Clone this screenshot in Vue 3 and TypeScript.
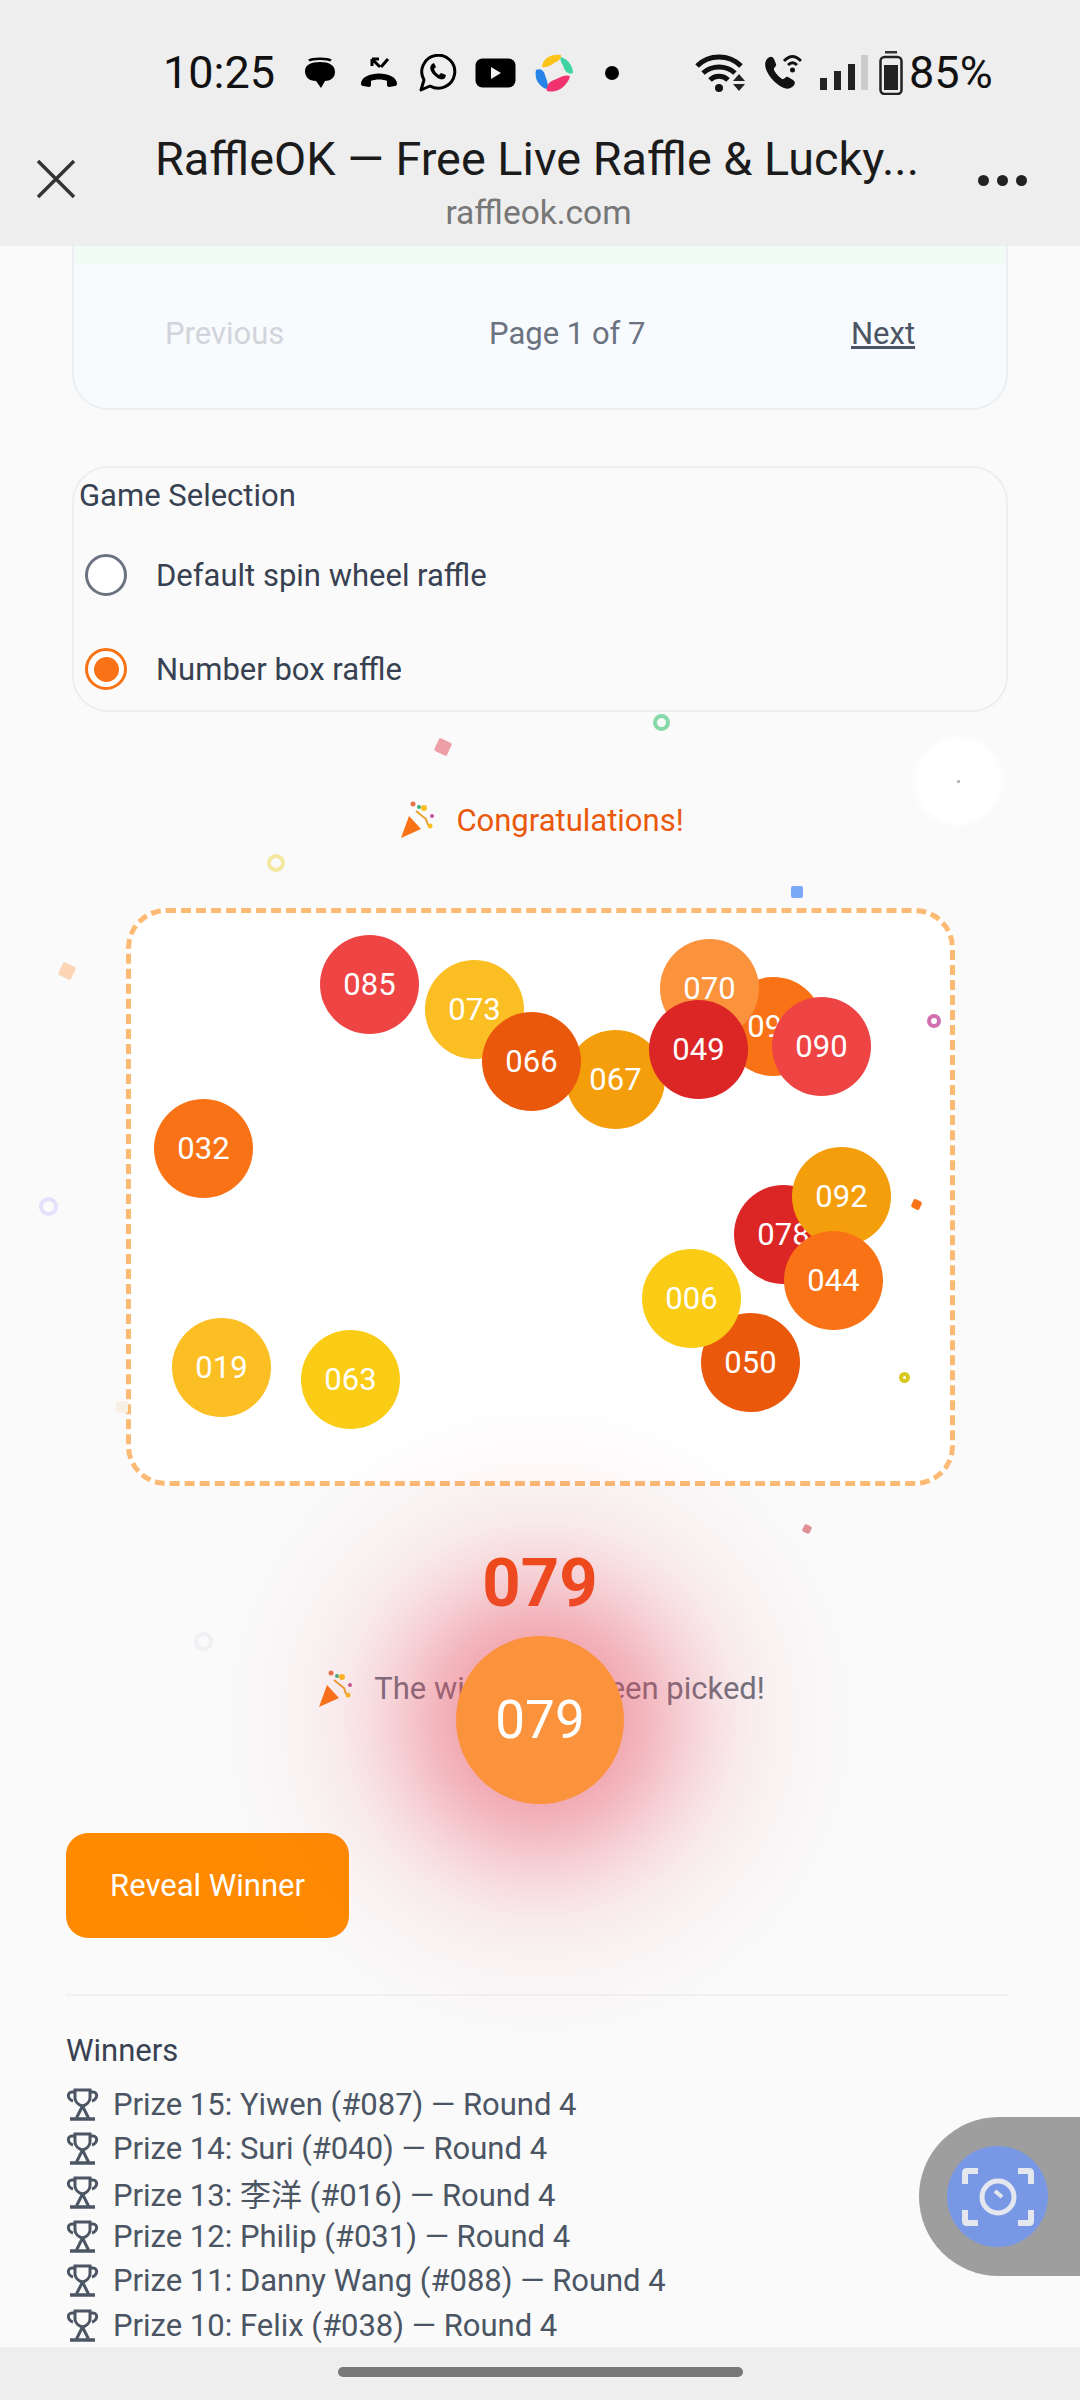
<template>
  <div class="screen">
    <header class="topbar">
      <div class="status">
        <span class="time">10:25</span>
        <svg class="ic" style="margin-left:28px" width="34" height="32" viewBox="0 0 34 32">
          <path d="M6 3.500C9 1 25 1 28 3.500" fill="none" stroke="#000" stroke-width="2.500" />
          <path d="M17 5c9 0 15 3 15 10 0 6-5 9-10 9l-4 7-5-7C6 24 2 20 2 14 2 8 8 5 17 5z" fill="#000" />
        </svg>
        <svg class="ic" style="margin-left:21px" width="42" height="32" viewBox="0 0 42 32">
          <path d="M3 27c0-14 36-14 36 0 0 1-1 2-2 2l-6 1c-1 0-2-1-2-2v-4c-4-2-12-2-16 0v4c0 1-1 2-2 2l-6-1c-1 0-2-1-2-2z" fill="#000" />
          <path d="M14 2l8 8M14 2v7M14 2h7M23 10l7-8" fill="none" stroke="#000" stroke-width="3" />
        </svg>
        <svg class="ic" style="margin-left:19px" width="38" height="38" viewBox="0 0 38 38">
          <path d="M2 36l3-10a16.500 16.500 0 1 1 6 6z" fill="none" stroke="#000" stroke-width="3" stroke-linejoin="round" />
          <path d="M13 10c-3 3-2 7 2 11s8 6 11 3l1-3-5-2-2 2c-2-1-4-3-5-6l2-2-2-4z" fill="#000" />
        </svg>
        <svg class="ic" style="margin-left:18px" width="41" height="30" viewBox="0 0 41 30">
          <rect x="0.500" y="0.500" width="40" height="29" rx="7" fill="#000" />
          <path d="M16 9l10 6-10 6z" fill="#f0f0f0" />
        </svg>
        <svg class="ic" style="margin-left:17px" width="42" height="42" viewBox="0 0 42 42">
          <path d="M9 15C9 8 17 1 28 3c1 4-3 6-7 8-3 2-7 5-12 4z" fill="#fcc419" />
          <path d="M28 5c6 2 12 8 12 16-5 2-8-2-9-5-1-4-5-7-3-11z" fill="#3ed3a3" />
          <path d="M14 39c-2-5 2-9 7-11 5-2 10-6 16-4-2 9-12 18-23 15z" fill="#f0326e" />
          <path d="M13 37C6 34 1 27 3 18c5-2 8 1 9 5 1 4 5 10 1 14z" fill="#2684e8" />
        </svg>
        <i class="dot"></i>
        <svg class="ic" style="margin-left:76px" width="52" height="40" viewBox="0 0 52 40">
          <path d="M2 13c12-12 32-12 44 0M8 20c9-8 23-8 32 0M15 27c5-5 13-5 18 0" fill="none" stroke="#111" stroke-width="5" />
          <circle cx="24" cy="35" r="4" fill="#111" />
          <path d="M38 28l6-7 6 7zM38 31h12l-6 7z" fill="#222" />
        </svg>
        <svg class="ic" style="margin-left:17px" width="38" height="38" viewBox="0 0 38 38">
          <path d="M3 5c3-3 5-3 7 0l2 5c1 2-3 4-2 6 2 4 5 7 8 9 2 1 4-3 6-2l5 3c3 2 2 5-1 7-4 3-9 2-16-4C4 22-2 11 3 5z" fill="#111" />
          <path d="M20 7c6-6 11-6 17 0M24 11c3-3 6-3 9 0" fill="none" stroke="#111" stroke-width="3" />
          <circle cx="28.500" cy="16" r="2.500" fill="#111" />
        </svg>
        <svg class="ic" style="margin-left:18px" width="48" height="36" viewBox="0 0 48 36">
          <rect x="0" y="23" width="7" height="12" fill="#222" />
          <rect x="14" y="16" width="7" height="19" fill="#222" />
          <rect x="28" y="9" width="7" height="26" fill="#222" />
          <rect x="41" y="0" width="7" height="35" fill="#ccc" />
        </svg>
        <svg class="ic" style="margin-left:11px" width="24" height="44" viewBox="0 0 24 44">
          <rect x="6" y="0" width="12" height="2.500" fill="#333" />
          <rect x="1.500" y="6" width="21" height="37" rx="4" fill="none" stroke="#222" stroke-width="2.500" />
          <rect x="5" y="14" width="14" height="25" fill="#222" />
        </svg>
        <span class="pct">85%</span>
      </div>
      <div class="title-bar">
        <div class="close">
          <svg width="40" height="40" viewBox="0 0 40 40"><path d="M2 2l36 36M38 2L2 38" stroke="#333" stroke-width="3.500" /></svg>
        </div>
        <div class="title-text">
          <div class="title">RaffleOK — Free Live Raffle &amp; Lucky...</div>
          <div class="url">raffleok.com</div>
        </div>
        <div class="more"><i></i><i></i><i></i></div>
      </div>
    </header>

    <main class="page">
      <section class="card pager-card">
        <div class="green-strip"></div>
        <div class="pager">
          <span class="prev">Previous</span>
          <span class="page-no">Page 1 of 7</span>
          <a class="next">Next</a>
        </div>
      </section>

      <section class="card game-card">
        <div class="legend">Game Selection</div>
        <label class="radio-row">
          <span class="radio"></span>
          <span>Default spin wheel raffle</span>
        </label>
        <label class="radio-row">
          <span class="radio on"><i></i></span>
          <span>Number box raffle</span>
        </label>
      </section>

      <div class="congrats">
        <svg class="popper" width="38" height="38" viewBox="0 0 38 38">
          <path d="M1 37l8-22 12 13z" fill="#f97316" />
          <circle cx="13" cy="3" r="2.500" fill="#e8734a" />
          <circle cx="19" cy="6" r="2" fill="#3fae7a" />
          <circle cx="24" cy="7" r="3" fill="#fbbf24" />
          <circle cx="32" cy="15" r="2" fill="#c0569a" />
          <circle cx="30" cy="25" r="2.500" fill="#fbbf24" />
          <path d="M16 10l10 8 2 6" fill="none" stroke="#e8a030" stroke-width="2" />
        </svg>
        <span>Congratulations!</span>
      </div>

      <div class="box">
        <div
          v-for="b in bubbles"
          :key="b.n"
          class="bubble"
          :style="{ left: b.x - 180 + 'px', top: b.y - 963 + 'px', background: b.c }"
        >
          {{ b.n }}
        </div>
      </div>

      <div class="reveal">
        <div class="big-no">079</div>
        <div class="picked">
          <svg class="popper" width="38" height="38" viewBox="0 0 38 38">
            <path d="M1 37l8-22 12 13z" fill="#f97316" />
            <circle cx="13" cy="3" r="2.500" fill="#e8734a" />
            <circle cx="19" cy="6" r="2" fill="#3fae7a" />
            <circle cx="24" cy="7" r="3" fill="#fbbf24" />
            <circle cx="32" cy="15" r="2" fill="#c0569a" />
            <circle cx="30" cy="25" r="2.500" fill="#fbbf24" />
            <path d="M16 10l10 8 2 6" fill="none" stroke="#e8a030" stroke-width="2" />
          </svg>
          <span>The winner has been picked!</span>
        </div>
        <div class="glow"></div>
        <div class="winner-ball">079</div>
      </div>

      <button class="reveal-btn">Reveal Winner</button>

      <div class="winners">
        <h3>Winners</h3>
        <div v-for="w in winners" :key="w" class="winner-row">
          <svg width="33" height="33" viewBox="0 0 33 33" fill="none" stroke="#4b5563" stroke-width="3">
            <path d="M9 2h15v8c0 4-4 7-7.500 8C13 17 9 14 9 10z" />
            <path d="M9 4H6C1 4 1 11 7 13M24 4h3c5 0 5 7-1 9" />
            <path d="M16.500 18l-6 12M16.500 18l6 12" />
            <path d="M4 31h25" stroke-width="3.500" />
          </svg>
          <span>{{ w }}</span>
        </div>
      </div>
    </main>

    <footer class="navbar"><i></i></footer>

    <div class="confetti">
      <i
        v-for="(c, i) in confetti"
        :key="i"
        :class="c.k"
        :style="{ left: c.x - c.s / 2 + 'px', top: c.y - c.s / 2 + 'px', width: c.s + 'px', height: c.s + 'px', color: c.c }"
      ></i>
    </div>

    <div class="shot-tab">
      <div class="shot-btn">
        <svg width="72" height="58" viewBox="0 0 72 58" fill="none" stroke="#e4e7ee">
          <path d="M3 16V5q0-2 2-2h11M56 3h11q2 0 2 2v11M3 42v11q0 2 2 2h11M56 55h11q2 0 2-2V42" stroke-width="6" />
          <circle cx="36" cy="29" r="16" stroke-width="5" />
          <path d="M33 23l7 6" stroke-width="4" />
        </svg>
      </div>
    </div>
  </div>
</template>

<script setup lang="ts">
interface Bubble {
  n: string
  x: number
  y: number
  c: string
}

const bubbles: Bubble[] = [
  { n: '085', x: 369, y: 985, c: '#ef4444' },
  { n: '073', x: 474, y: 1010, c: '#fbbf24' },
  { n: '067', x: 615, y: 1080, c: '#f59e0b' },
  { n: '066', x: 531, y: 1062, c: '#ea580c' },
  { n: '095', x: 773, y: 1027, c: '#f97316' },
  { n: '070', x: 709, y: 989, c: '#fb923c' },
  { n: '049', x: 698, y: 1050, c: '#dc2626' },
  { n: '090', x: 821, y: 1047, c: '#ef4444' },
  { n: '032', x: 203, y: 1149, c: '#f97316' },
  { n: '078', x: 783, y: 1235, c: '#dc2626' },
  { n: '092', x: 841, y: 1197, c: '#f59e0b' },
  { n: '044', x: 833, y: 1281, c: '#f97316' },
  { n: '050', x: 750, y: 1363, c: '#ea580c' },
  { n: '006', x: 691, y: 1299, c: '#facc15' },
  { n: '019', x: 221, y: 1368, c: '#fbbf24' },
  { n: '063', x: 350, y: 1380, c: '#facc15' }
]

const winners = [
  'Prize 15: Yiwen (#087) — Round 4',
  'Prize 14: Suri (#040) — Round 4',
  'Prize 13: 李洋 (#016) — Round 4',
  'Prize 12: Philip (#031) — Round 4',
  'Prize 11: Danny Wang (#088) — Round 4',
  'Prize 10: Felix (#038) — Round 4'
]

// falling confetti, caught mid-air so every piece has its own spot
const confetti = [
  { k: 'ring', x: 661, y: 722, s: 17, c: '#86d9a8' },
  { k: 'diamond', x: 443, y: 747, s: 14, c: '#eea0a8' },
  { k: 'blob', x: 958, y: 781, s: 84, c: '#ffffff' },
  { k: 'ring', x: 276, y: 863, s: 18, c: '#f5e6a0' },
  { k: 'square', x: 797, y: 892, s: 12, c: '#7ba8f8' },
  { k: 'diamond', x: 67, y: 971, s: 14, c: '#fbd5b5' },
  { k: 'ring', x: 934, y: 1021, s: 14, c: '#d070b0' },
  { k: 'diamond', x: 916, y: 1204, s: 9, c: '#f97316' },
  { k: 'ring', x: 904, y: 1377, s: 11, c: '#d8c820' },
  { k: 'ring', x: 48, y: 1206, s: 19, c: '#e5e0fb' },
  { k: 'square', x: 122, y: 1407, s: 12, c: '#f8efe5' },
  { k: 'ring', x: 203, y: 1641, s: 19, c: '#f0f0f4' },
  { k: 'diamond', x: 807, y: 1529, s: 8, c: '#e08f95' }
]
</script>

<style>
html,
body {
  margin: 0;
  background: #fafafa;
}
</style>

<style scoped>
.screen {
  position: relative;
  display: flex;
  flex-direction: column;
  width: 1080px;
  height: 2400px;
  overflow: hidden;
  background: #fafafa;
  font-family: Roboto, "Noto Sans CJK SC", sans-serif;
  color: #374151;
}
.topbar {
  flex: none;
  height: 246px;
  background: #eeeeee;
}
.status {
  display: flex;
  align-items: center;
  height: 46px;
  padding: 50px 0 0 163px;
  color: #111;
}
.ic {
  flex: none;
  display: block;
}
.time,
.pct {
  font-size: 45px;
  line-height: 46px;
}
.pct {
  margin-left: 6px;
}
.dot {
  width: 14px;
  height: 14px;
  margin-left: 30px;
  border-radius: 50%;
  background: #000;
}
.title-bar {
  display: flex;
  align-items: center;
  margin-top: 35px;
  padding: 0 53px 0 36px;
}
.close {
  flex: none;
  width: 40px;
  height: 40px;
  margin-top: -6px;
}
.title-text {
  flex: 1;
  text-align: center;
  margin-left: 20px;
}
.title {
  font-size: 46.800px;
  line-height: 56px;
  color: #1b1b1b;
}
.url {
  margin-top: 6px;
  padding-left: 3px;
  font-size: 33.500px;
  line-height: 40px;
  color: #777;
}
.more {
  display: flex;
  gap: 8px;
  flex: none;
  margin-top: -3px;
}
.more i {
  width: 11px;
  height: 11px;
  border-radius: 50%;
  background: #222;
}
.page {
  flex: 1;
  overflow: hidden;
}
.card {
  box-sizing: border-box;
  margin: 0 72px;
  border: 2px solid #eceef1;
  border-radius: 36px;
}
.pager-card {
  height: 164px;
  border-top: 0;
  border-radius: 0 0 36px 36px;
  background: #f8fbfe;
}
.green-strip {
  height: 18px;
  background: #f1fbf5;
}
.pager {
  display: grid;
  grid-template-columns: 324px 362px auto;
  padding: 50px 0 0 91px;
  font-size: 31px;
  line-height: 40px;
}
.prev {
  color: #d1d5db;
}
.page-no {
  color: #6b7280;
}
.next {
  color: #4b5563;
  text-decoration: underline;
}
.game-card {
  height: 246px;
  margin-top: 56px;
  padding: 6px 5px 0;
  font-size: 31px;
}
.legend {
  line-height: 44px;
  color: #374151;
}
.radio-row {
  display: flex;
  align-items: center;
  gap: 29px;
  height: 94px;
  margin-left: 6px;
  color: #374151;
}
.radio-row:first-of-type {
  margin-top: 10px;
}
.radio {
  box-sizing: border-box;
  display: flex;
  align-items: center;
  justify-content: center;
  width: 42px;
  height: 42px;
  border: 3px solid #6b7280;
  border-radius: 50%;
  background: #fff;
}
.radio.on {
  border-color: #f97316;
}
.radio.on i {
  width: 25px;
  height: 25px;
  border-radius: 50%;
  background: #f97316;
}
.congrats {
  display: flex;
  align-items: center;
  justify-content: center;
  gap: 18px;
  height: 44px;
  margin-top: 86px;
  padding-left: 4px;
  font-size: 31px;
  color: #ea580c;
}
.box {
  position: relative;
  box-sizing: border-box;
  width: 829px;
  height: 578px;
  margin: 66px 0 0 126px;
  border: 5px dashed #fdba74;
  border-radius: 40px;
  background: #fff;
}
.bubble {
  position: absolute;
  display: flex;
  align-items: center;
  justify-content: center;
  width: 99px;
  height: 99px;
  border-radius: 50%;
  font-size: 31px;
  color: #fff;
}
.reveal {
  position: relative;
  height: 345px;
  text-align: center;
}
.big-no {
  padding-top: 57px;
  font-size: 67px;
  line-height: 80px;
  font-weight: 700;
  color: #ef4a0e;
}
.picked {
  display: flex;
  align-items: center;
  justify-content: center;
  gap: 18px;
  margin-top: 46px;
  padding-left: 3px;
  font-size: 31px;
  line-height: 40px;
  color: #6b7280;
}
.glow {
  position: absolute;
  left: 220px;
  top: -86px;
  width: 640px;
  height: 640px;
  border-radius: 50%;
  background: radial-gradient(
    circle closest-side,
    rgba(232, 70, 90, 0.44) 84px,
    rgba(232, 70, 90, 0.36) 110px,
    rgba(232, 70, 90, 0.25) 140px,
    rgba(232, 70, 90, 0.16) 170px,
    rgba(232, 70, 90, 0.09) 200px,
    rgba(232, 70, 90, 0.045) 240px,
    rgba(232, 70, 90, 0.02) 280px,
    rgba(232, 70, 90, 0) 320px
  );
}
.winner-ball {
  position: absolute;
  left: 456px;
  top: 150px;
  width: 168px;
  height: 168px;
  border-radius: 50%;
  background: #fb923c;
  color: #fff;
  font-size: 53px;
  line-height: 168px;
}
.reveal-btn {
  display: block;
  width: 283px;
  height: 105px;
  margin: 2px 0 0 66px;
  border: 0;
  border-radius: 22px;
  background: #ff8a00;
  color: #fff;
  font: 31px Roboto, sans-serif;
}
.winners {
  margin: 56px 72px 0 66px;
  padding-top: 33px;
  border-top: 2px solid #f1f1f1;
  font-size: 31px;
  color: #4b5563;
}
.winners h3 {
  margin: 0 0 9px;
  font-size: 31px;
  line-height: 44px;
  font-weight: 400;
  color: #374151;
}
.winner-row {
  display: flex;
  align-items: center;
  gap: 14px;
  height: 44.200px;
  white-space: nowrap;
}
.winner-row svg {
  flex: none;
}
.navbar {
  flex: none;
  position: relative;
  z-index: 3;
  display: flex;
  align-items: center;
  justify-content: center;
  height: 53px;
  background: #eeeeee;
}
.navbar i {
  width: 405px;
  height: 10px;
  margin-bottom: 4px;
  border-radius: 5px;
  background: #787878;
}
.confetti {
  position: absolute;
  inset: 0;
  pointer-events: none;
}
.confetti i {
  position: absolute;
  box-sizing: border-box;
}
.ring {
  border: 4px solid currentColor;
  border-radius: 50%;
}
.square {
  border-radius: 2px;
  background: currentColor;
}
.diamond {
  border-radius: 2px;
  background: currentColor;
  transform: rotate(25deg);
}
.blob {
  border-radius: 50%;
  background: currentColor;
  box-shadow: 0 0 6px 2px #fff;
}
.blob::after {
  content: "";
  position: absolute;
  left: 41px;
  top: 41px;
  width: 3px;
  height: 3px;
  background: #bbb;
}
.shot-tab {
  position: absolute;
  right: 0;
  top: 2117px;
  display: flex;
  align-items: center;
  width: 161px;
  height: 159px;
  padding-left: 28px;
  box-sizing: border-box;
  border-radius: 80px 0 0 80px;
  background: #9e9e9e;
}
.shot-btn {
  display: flex;
  align-items: center;
  justify-content: center;
  width: 101px;
  height: 101px;
  border-radius: 50%;
  background: #7898e6;
}
</style>
